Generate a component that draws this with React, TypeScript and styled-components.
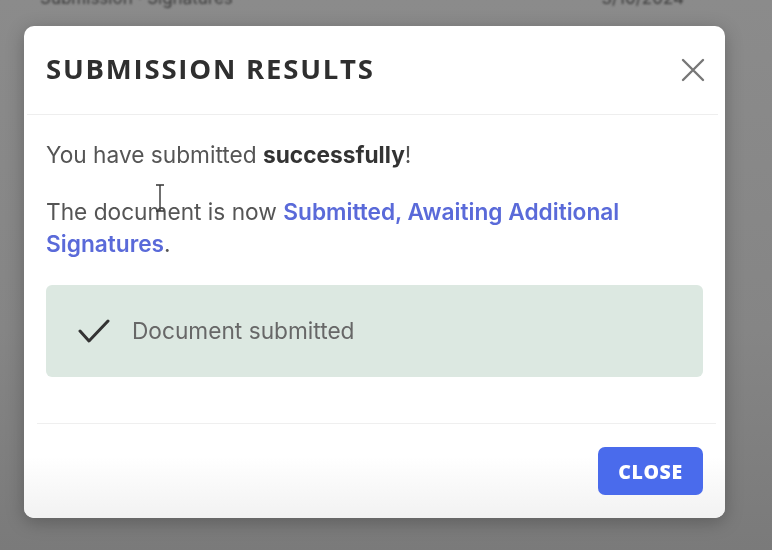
import styled, { createGlobalStyle } from "styled-components";

const GlobalStyle = createGlobalStyle`
  html, body {
    margin: 0;
    padding: 0;
    height: 100%;
  }
  body {
    font-family: Inter, "Noto Sans", sans-serif;
    background: #8a8a8a;
    overflow: hidden;
  }
`;

// the page behind the dialog, mostly hidden by the backdrop
const Page = styled.div`
  width: 772px;
  height: 550px;
  background: linear-gradient(180deg, #8b8b8b 0%, #858585 60%, #7a7a7a 100%);
  overflow: hidden;
`;

const BackRow = styled.div`
  display: flex;
  justify-content: space-between;
  margin-top: -12px;
  padding: 0 88px 0 40px;
  font-size: 17px;
  color: #3a3a3a;
  filter: blur(1px);
`;

const Backdrop = styled.div`
  position: fixed;
  inset: 0;
  display: flex;
  align-items: flex-start;
  padding: 26px 0 0 24px;
`;

const Modal = styled.div`
  width: 701px;
  height: 492px;
  background: #fff;
  border-radius: 10px;
  box-shadow: 0 4px 18px rgba(0, 0, 0, 0.25);
  display: flex;
  flex-direction: column;
  position: relative;
  overflow: hidden;
`;

const Header = styled.div`
  height: 88px;
  flex-shrink: 0;
  display: flex;
  align-items: center;
  justify-content: space-between;
  padding: 0 12px 0 19px;
  margin-left: 3px;
  margin-right: 7px;
  border-bottom: 1px solid #eeeeee;
`;

const Title = styled.h2`
  margin: 0 0 3px 0;
  font-family: "Open Sans", sans-serif;
  font-weight: 700;
  font-size: 27.5px;
  letter-spacing: 1.8px;
  color: #2f2f2f;
`;

const CloseX = styled.button`
  border: none;
  background: none;
  padding: 0;
  width: 26px;
  height: 26px;
  display: flex;
  cursor: pointer;
`;

const Body = styled.div`
  padding: 24px 13px 46px 9px;
  margin: 0 9px 0 13px;
  border-bottom: 1px solid #efefef;
  font-size: 22.7px;
  line-height: 32px;
  color: #555;
`;

const Para = styled.p<{ $last?: boolean }>`
  margin: 0 0 ${(p) => (p.$last ? "0" : "25px")} 0;
`;

const Strong = styled.b`
  font-weight: 700;
  color: #333;
`;

const Link = styled.span`
  font-weight: 600;
  color: #5a6ad9;
`;

const Banner = styled.div`
  margin-top: 25px;
  height: 92px;
  border-radius: 6px;
  background: #dce8e1;
  display: flex;
  align-items: center;
  gap: 22px;
  padding-left: 32px;
  font-size: 22.7px;
  color: #676767;
`;

const Footer = styled.div`
  flex: 1;
  display: flex;
  justify-content: flex-end;
  align-items: flex-start;
  padding: 23px 22px 0 0;
  background: linear-gradient(180deg, #fff 0%, #fff 35%, #f2f2f2 100%);
`;

const CloseButton = styled.button`
  width: 105px;
  height: 48px;
  border: none;
  border-radius: 7px;
  background: #4a6bec;
  color: #fff;
  font-family: "Open Sans", sans-serif;
  font-weight: 800;
  font-size: 19.5px;
  letter-spacing: 0.6px;
  cursor: pointer;
`;

const Cursor = styled.svg`
  position: absolute;
  left: 131px;
  top: 158px;
`;

export default function App() {
  return (
    <>
      <GlobalStyle />
      <Page>
        <BackRow>
          <span>Submission · Signatures</span>
          <span>3/10/2024</span>
        </BackRow>
      </Page>
      <Backdrop>
        <Modal>
          <Header>
            <Title>SUBMISSION RESULTS</Title>
            <CloseX aria-label="close">
              <svg width="26" height="26" viewBox="0 0 26 26">
                <path
                  d="M3 3 L23 23 M23 3 L3 23"
                  stroke="#777"
                  strokeWidth="2.4"
                  strokeLinecap="round"
                />
              </svg>
            </CloseX>
          </Header>
          <Body>
            <Para>
              You have submitted <Strong>successfully</Strong>!
            </Para>
            <Para $last>
              The document is now{" "}
              <Link>Submitted, Awaiting Additional Signatures</Link>.
            </Para>
            <Banner>
              <svg width="32" height="26" viewBox="0 0 32 26">
                <path
                  d="M2 13 L11 23 L30 3"
                  fill="none"
                  stroke="#333"
                  strokeWidth="3"
                  strokeLinecap="round"
                  strokeLinejoin="round"
                />
              </svg>
              <span>Document submitted</span>
            </Banner>
          </Body>
          <Footer>
            <CloseButton>CLOSE</CloseButton>
          </Footer>
          {/* text cursor over the second line */}
          <Cursor width="10" height="28" viewBox="0 0 10 28">
            <path
              d="M1 1 H9 M5 1 V27 M1 27 H9"
              stroke="#333"
              strokeWidth="1.4"
              fill="none"
            />
          </Cursor>
        </Modal>
      </Backdrop>
    </>
  );
}
